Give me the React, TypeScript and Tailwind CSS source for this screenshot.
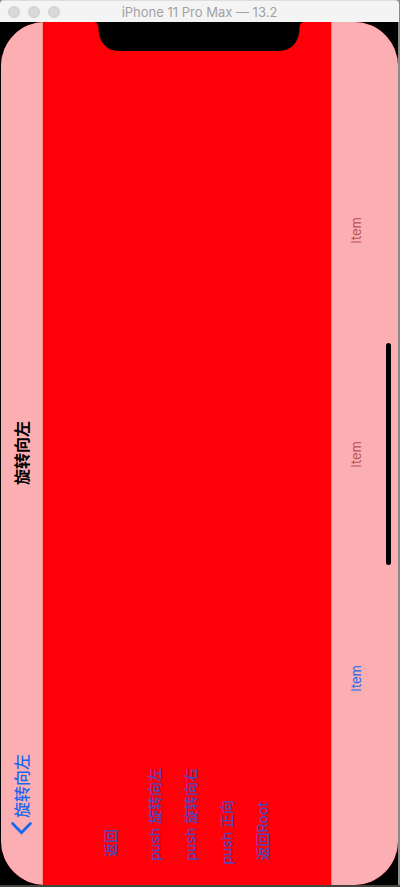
import React from "react";

const vertical =
  "[writing-mode:vertical-rl] [text-orientation:sideways] rotate-180 whitespace-nowrap";

const actions = [
  { label: "返回", place: "mb-7 mr-2" },
  { label: "push 旋转向左", place: "mb-6" },
  { label: "push 旋转向右", place: "mb-6" },
  { label: "push 正向", place: "mb-5" },
  { label: "返回Root", place: "mb-6" },
];

const items = [
  { id: "top", color: "text-[#bd5257]", disabled: true },
  { id: "middle", color: "text-[#bd5257]", disabled: true },
  { id: "bottom", color: "text-[#1768f0]", disabled: false },
];

function TitleBar() {
  return (
    <header className="mr-px grid h-[22px] grid-cols-[1fr_auto_1fr] items-center rounded-t border-t border-[#dedede] bg-[#f4f4f4]">
      <div className="flex gap-2 pl-2">
        {["Close", "Minimise", "Zoom"].map((name) => (
          <button
            key={name}
            aria-label={name}
            className="size-3 rounded-full border border-[#cfcfcf] bg-[#d8d8d7]"
          />
        ))}
      </div>
      <h1 className="text-[13px] leading-5 text-[#a2a2a2]">iPhone 11 Pro Max — 13.2</h1>
    </header>
  );
}

function NavigationBar() {
  return (
    <nav className="grid w-[42px] shrink-0 grid-rows-[1fr_auto_1fr] justify-items-center border-r border-[#f88a8d] bg-[#fbafb3]">
      <h2 className={`row-start-2 text-base leading-6 font-bold text-black ${vertical}`}>
        旋转向左
      </h2>
      <button className="row-start-3 mb-[50px] flex flex-col items-center gap-1 self-end text-[#1768f0]">
        <span className={`text-base leading-6 font-medium ${vertical}`}>旋转向左</span>
        <svg width="21" height="13" viewBox="0 0 21 13" fill="none" aria-hidden="true">
          <path
            d="M1.600 1.600 10.500 10.700 19.400 1.600"
            stroke="currentColor"
            strokeWidth="2.800"
            strokeLinecap="round"
          />
        </svg>
      </button>
    </nav>
  );
}

function Toolbar() {
  return (
    <footer className="flex w-[67px] shrink-0 border-l border-[#f27a7c] bg-[#fbafb3]">
      <div className="flex w-12 flex-col items-center justify-between pt-[195px] pb-[193px]">
        {items.map((item) => (
          <button
            key={item.id}
            disabled={item.disabled}
            className={`text-[13px] leading-4 ${item.color} ${vertical}`}
          >
            Item
          </button>
        ))}
      </div>
      <div className="ml-1.5 h-[222px] w-[5px] self-center rounded-full bg-black" />
    </footer>
  );
}

export default function App() {
  return (
    <div className="flex min-h-screen flex-col bg-[#8b8b87] font-['Inter','Noto_Sans_CJK_SC',sans-serif]">
      <TitleBar />
      <div className="relative mr-0.5 flex flex-1 bg-black pl-px">
        <main className="flex flex-1 overflow-hidden rounded-[44px] bg-[#ff0008]">
          <NavigationBar />
          <section className="flex flex-1 items-end gap-4 pl-[58px]">
            {actions.map((action) => (
              <button
                key={action.label}
                className={`text-sm leading-5 font-medium text-[#5146b8] ${action.place} ${vertical}`}
              >
                {action.label}
              </button>
            ))}
          </section>
          <Toolbar />
        </main>
        <svg
          className="absolute top-0 left-1/2 -translate-x-1/2"
          width="210"
          height="29"
          viewBox="0 0 210 29"
          aria-hidden="true"
        >
          <path d="M0 0H210C207 0 205.500 2 205.500 6C205.500 20 197 29 185 29H25C13 29 4.500 20 4.500 6C4.500 2 3 0 0 0Z" />
        </svg>
      </div>
      <div className="h-0.5 bg-[#45443f]" />
    </div>
  );
}
